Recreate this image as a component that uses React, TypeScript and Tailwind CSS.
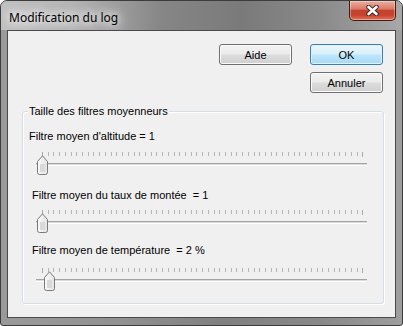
import React from "react";

function Thumb() {
  return (
    <svg width="11" height="20" viewBox="0 0 11 20" className="block">
      <defs>
        <linearGradient id="thumbGrad" x1="0" y1="0" x2="1" y2="0">
          <stop offset="0" stopColor="#fbfbfb" />
          <stop offset="1" stopColor="#e2e2e2" />
        </linearGradient>
      </defs>
      <path
        d="M0.5 6.5 L5.5 0.8 L10.5 6.5 V17.5 Q10.5 19.5 8.5 19.5 H2.5 Q0.5 19.5 0.5 17.5 Z"
        fill="url(#thumbGrad)"
        stroke="#7a7a7a"
      />
      <rect x="3" y="9" width="5" height="8" fill="#d9d9d9" />
    </svg>
  );
}

function Slider({ thumbX }: { thumbX: number }) {
  const ticks = Array.from({ length: 57 }, (_, i) => i);
  return (
    <div className="relative h-[23px] w-[331px]">
      <div className="absolute left-[6px] top-0 flex h-[5px] w-[322px] items-start justify-between">
        {ticks.map((i) => (
          <div
            key={i}
            className={
              i === 0 || i === ticks.length - 1
                ? "h-[5px] w-px bg-[#a9a9a9]"
                : "h-[4px] w-px bg-[#b5b5b5]"
            }
          />
        ))}
      </div>
      <div className="absolute left-0 right-0 top-[11px] h-[3px] border-t border-b border-t-[#a3a3a3] border-b-white bg-[#dcdcdc]" />
      <div className="absolute top-[3px]" style={{ left: thumbX }}>
        <Thumb />
      </div>
    </div>
  );
}

const btnBase =
  "flex h-[21px] w-[73px] items-center justify-center rounded-[3px] border text-[11px] leading-[16px] text-black font-['Liberation_Sans',Arial,sans-serif]";
const btnNormal =
  "border-[#707070] bg-[linear-gradient(180deg,#f3f3f3_0%,#ebebeb_48%,#dddddd_52%,#cfcfcf_100%)] shadow-[inset_0_0_0_1px_#fbfbfb]";
const btnDefault =
  "border-[#3c7fb1] bg-[linear-gradient(180deg,#eaf6fd_0%,#d9f0fc_48%,#bee6fd_52%,#a7d9f5_100%)] shadow-[inset_0_0_0_1px_#dff2fc]";

export default function App() {
  return (
    <div className="h-[326px] w-[403px] bg-white font-['Liberation_Sans',Arial,sans-serif]">
      <div className="flex h-[326px] w-[403px] flex-col overflow-hidden rounded-t-[7px] rounded-b-[3px] border border-[#3c3c3c] bg-[linear-gradient(90deg,#9a9a9a_0%,#919191_30%,#808080_55%,#888888_80%,#9e9e9e_100%)]">
        {/* Title bar */}
        <div className="flex h-[29px] items-start justify-between bg-[linear-gradient(90deg,#c0c0c0_0%,#b4b4b4_18%,#868686_40%,#7a7a7a_60%,#8a8a8a_80%,#a8a8a8_100%)]">
          <div className="pl-[8px] pt-[9px] font-['Noto_Sans',sans-serif] text-[12px] leading-[16px] text-black [text-shadow:0_0_8px_#ffffff,0_0_12px_#ffffff,0_0_16px_#ffffff]">
            Modification du log
          </div>
          <div className="mr-[6px] flex h-[20px] w-[47px] items-center justify-center rounded-b-[5px] border border-t-0 border-[#4a1a12] bg-[linear-gradient(180deg,#ebb0a2_0%,#d97966_42%,#c3412f_50%,#c7432f_75%,#e0775c_100%)] shadow-[inset_0_0_0_1px_rgba(255,255,255,0.35)]">
            <svg width="13" height="11" viewBox="0 0 13 11" className="block">
              <path d="M2.5 2 L10.5 9 M10.5 2 L2.5 9" stroke="#3b2a28" strokeWidth="4.4" strokeLinecap="round" />
              <path d="M2.5 2 L10.5 9 M10.5 2 L2.5 9" stroke="#ffffff" strokeWidth="2.6" strokeLinecap="round" />
            </svg>
          </div>
        </div>

        {/* Client area */}
        <div className="flex-1 px-[6px] pb-[7px]">
          <div className="flex h-full flex-col border border-[#4a4a4a] bg-[#f0f0f0] text-[11px] leading-[16px] text-black">
            <div className="flex justify-end pr-[12px] pt-[13px]">
              <button className={`${btnBase} ${btnNormal} mr-[18px]`}>Aide</button>
              <div className="flex flex-col gap-[7px]">
                <button className={`${btnBase} ${btnDefault}`}>OK</button>
                <button className={`${btnBase} ${btnNormal}`}>Annuler</button>
              </div>
            </div>

            <div className="relative ml-[14px] mr-[11px] mt-[18px] h-[193px] rounded-[3px] border border-[#d5dfe5] shadow-[inset_1px_1px_0_#ffffff,1px_1px_0_#ffffff]">
              <div className="absolute left-[5px] top-[-9px] bg-[#f0f0f0] px-[1px]">
                Taille des filtres moyenneurs
              </div>
              <div className="flex flex-col pt-[16px]">
                <div className="pl-[6px] whitespace-pre">Filtre moyen d'altitude = 1</div>
                <div className="ml-[13px] mt-[8px]">
                  <Slider thumbX={1} />
                </div>
                <div className="mt-[12px] pl-[9px] whitespace-pre">Filtre moyen du taux de montée  = 1</div>
                <div className="ml-[13px] mt-[7px]">
                  <Slider thumbX={1} />
                </div>
                <div className="mt-[9px] pl-[9px] whitespace-pre">Filtre moyen de température  = 2 %</div>
                <div className="ml-[13px] mt-[10px]">
                  <Slider thumbX={8} />
                </div>
              </div>
            </div>
          </div>
        </div>
      </div>
    </div>
  );
}
